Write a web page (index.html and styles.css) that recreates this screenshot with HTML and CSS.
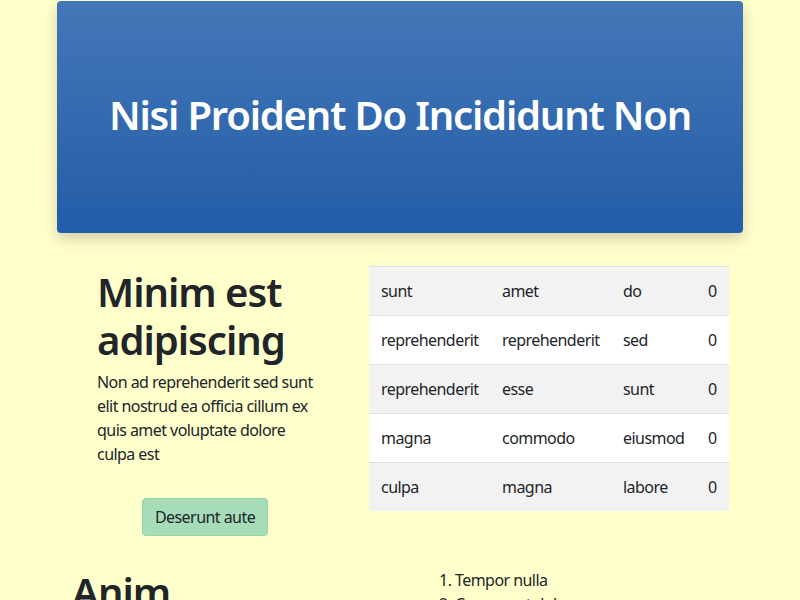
FILE: index.html
```html
<!DOCTYPE html>
<html>
<head>
<meta charset="utf-8">
<link rel="stylesheet" href="styles.css">
</head>
<body>
<div class="container">
  <header class="hero">
    <h1 class="hero-title">Nisi Proident Do Incididunt Non</h1>
  </header>
  <section class="row-top">
    <div class="intro">
      <h2 class="intro-title">Minim est adipiscing</h2>
      <p class="intro-text">Non ad reprehenderit sed sunt elit nostrud ea officia cillum ex quis amet voluptate dolore culpa est</p>
      <div class="btn-wrap"><button class="btn">Deserunt aute</button></div>
    </div>
    <div class="table-wrap">
      <table class="data">
        <colgroup><col class="c1"><col class="c2"><col class="c3"><col class="c4"></colgroup>
        <tr><td>sunt</td><td>amet</td><td>do</td><td>0</td></tr>
        <tr><td>reprehenderit</td><td>reprehenderit</td><td>sed</td><td>0</td></tr>
        <tr><td>reprehenderit</td><td>esse</td><td>sunt</td><td>0</td></tr>
        <tr><td>magna</td><td>commodo</td><td>eiusmod</td><td>0</td></tr>
        <tr><td>culpa</td><td>magna</td><td>labore</td><td>0</td></tr>
      </table>
    </div>
  </section>
  <section class="row-bottom">
    <div class="col">
      <h2 class="section-title">Anim</h2>
    </div>
    <div class="col">
      <ol class="list">
        <li>Tempor nulla</li>
        <li>Consequat dolor</li>
      </ol>
    </div>
  </section>
</div>
</body>
</html>
```
FILE: styles.css
```css
* { box-sizing: border-box; }
html, body { margin: 0; padding: 0; }
body {
  background: #ffffcc;
  color: #212529;
  font-family: "Noto Sans", "Open Sans", sans-serif;
  font-size: 16px;
  line-height: 24px;
  letter-spacing: -0.55px;
}
.container {
  width: 686px;
  margin: 0 auto;
  padding-top: 1px;
}
.hero {
  height: 232px;
  border-radius: 4px;
  background: linear-gradient(to bottom, #4477b7, #235da8);
  box-shadow: 0 6px 14px rgba(0, 0, 0, 0.18);
  display: flex;
  align-items: center;
  justify-content: center;
  padding-bottom: 5px;
}
.hero-title {
  margin: 0;
  color: #fff;
  font-size: 40px;
  line-height: 48px;
  font-weight: 600;
  letter-spacing: -1.2px;
}
.row-top {
  display: flex;
  margin-top: 33px;
  padding-left: 40px;
}
.intro {
  width: 220px;
}
.intro-title {
  margin: 2px 0 6px;
  font-size: 40px;
  line-height: 48px;
  font-weight: 600;
  letter-spacing: -1px;
}
.intro-text {
  margin: 0 0 16px;
}
.btn-wrap {
  display: flex;
  justify-content: center;
  padding-top: 16px;
  padding-right: 4px;
}
.btn {
  font: inherit;
  letter-spacing: -0.55px;
  color: #212529;
  background: #a6dcb8;
  border: 1px solid #93d4a9;
  border-radius: 4px;
  padding: 6px 12px;
  line-height: 24px;
}
.table-wrap {
  margin-left: 52px;
  width: 360px;
}
.data {
  width: 360px;
  table-layout: fixed;
  border-collapse: collapse;
}
.c1, .c2 { width: 121px; }
.c3 { width: 85px; }
.c4 { width: 33px; }
.data td {
  padding: 12px;
  border-top: 1px solid #dee2e6;
  line-height: 24px;
  white-space: nowrap;
}
.data tr:nth-child(odd) { background: #f2f2f2; }
.data tr:nth-child(even) { background: #fff; }
.row-bottom {
  display: flex;
  margin-top: 32px;
}
.col {
  width: 50%;
  padding: 0 15px;
}
.section-title {
  margin: 0;
  font-size: 40px;
  line-height: 48px;
  font-weight: 600;
  letter-spacing: -1px;
}
.list {
  margin: 0;
  padding-left: 40px;
}
.list li { line-height: 24px; }
```
